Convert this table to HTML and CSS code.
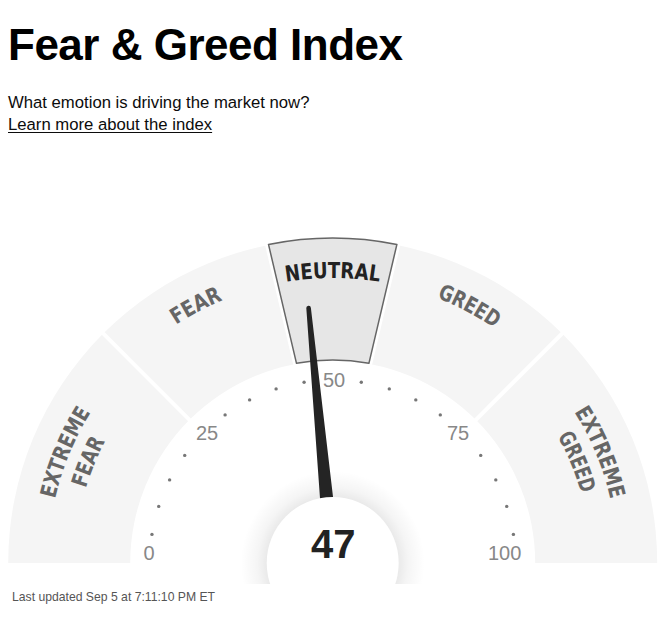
FILE: index.html
```html
<!DOCTYPE html>
<html lang="en">
<head>
<meta charset="utf-8">
<title>Fear &amp; Greed Index</title>
<link rel="stylesheet" href="styles.css">
</head>
<body>
<main class="page">
  <h1 class="title">Fear &amp; Greed Index</h1>
  <p class="subtitle">What emotion is driving the market now?</p>
  <a class="learn" href="#">Learn more about the index</a>
  <div class="gauge">
    <svg class="gauge-svg" width="650" height="352" viewBox="8 232 650 352" xmlns="http://www.w3.org/2000/svg">
      <defs>
        <path id="arc-outer" d="M47.7,563 A285,285 0 0 1 617.7,563"/>
        <path id="arc-inner" d="M74.7,563 A258,258 0 0 1 590.7,563"/>
        <radialGradient id="hub-shadow" cx="332.7" cy="563" r="92" gradientUnits="userSpaceOnUse">
          <stop offset="0.68" stop-color="#000" stop-opacity="0.10"/>
          <stop offset="0.82" stop-color="#000" stop-opacity="0.04"/>
          <stop offset="1" stop-color="#000" stop-opacity="0"/>
        </radialGradient>
      </defs>

      <!-- band ring -->
      <path class="band" d="M8.2,563 A324.5,324.5 0 0 1 657.2,563 L535.2,563 A202.5,202.5 0 0 0 130.2,563 Z"/>
      <line class="band-gap" x1="194.8" y1="425.1" x2="99.4" y2="329.7"/>
      <line class="band-gap" x1="470.6" y1="425.1" x2="566.0" y2="329.7"/>

      <!-- selected segment -->
      <path class="seg-halo" d="M268.5,244.4 A325,325 0 0 1 396.9,244.4 L368.9,363.3 A203,203 0 0 0 296.5,363.3 Z"/>
      <path class="seg-active" d="M268.5,244.4 A325,325 0 0 1 396.9,244.4 L368.9,363.3 A203,203 0 0 0 296.5,363.3 Z"/>

      <!-- band labels -->
      <text class="band-label"><textPath href="#arc-outer" startOffset="12.5%" text-anchor="middle" textLength="94" lengthAdjust="spacingAndGlyphs">EXTREME</textPath></text>
      <text class="band-label"><textPath href="#arc-inner" startOffset="12.5%" text-anchor="middle" textLength="51" lengthAdjust="spacingAndGlyphs">FEAR</textPath></text>
      <text class="band-label"><textPath href="#arc-outer" startOffset="34.44%" text-anchor="middle" textLength="53" lengthAdjust="spacingAndGlyphs">FEAR</textPath></text>
      <text class="band-label band-label-active"><textPath href="#arc-outer" startOffset="50%" text-anchor="middle" textLength="94" lengthAdjust="spacingAndGlyphs">NEUTRAL</textPath></text>
      <text class="band-label"><textPath href="#arc-outer" startOffset="65.56%" text-anchor="middle" textLength="65" lengthAdjust="spacingAndGlyphs">GREED</textPath></text>
      <text class="band-label"><textPath href="#arc-outer" startOffset="87.5%" text-anchor="middle" textLength="95" lengthAdjust="spacingAndGlyphs">EXTREME</textPath></text>
      <text class="band-label"><textPath href="#arc-inner" startOffset="87.5%" text-anchor="middle" textLength="62" lengthAdjust="spacingAndGlyphs">GREED</textPath></text>

      <!-- tick dots -->
      <g class="dots">
        <circle cx="151.95" cy="534.4" r="1.7"/>
        <circle cx="158.7" cy="506.4" r="1.7"/>
        <circle cx="169.6" cy="479.9" r="1.7"/>
        <circle cx="184.7" cy="455.4" r="1.7"/>
        <circle cx="225.1" cy="414.9" r="1.7"/>
        <circle cx="249.6" cy="399.9" r="1.7"/>
        <circle cx="276.1" cy="388.9" r="1.7"/>
        <circle cx="304.1" cy="382.3" r="1.7"/>
        <circle cx="361.3" cy="382.3" r="1.7"/>
        <circle cx="389.3" cy="388.9" r="1.7"/>
        <circle cx="415.8" cy="399.9" r="1.7"/>
        <circle cx="440.3" cy="414.9" r="1.7"/>
        <circle cx="480.7" cy="455.4" r="1.7"/>
        <circle cx="495.8" cy="479.9" r="1.7"/>
        <circle cx="506.7" cy="506.4" r="1.7"/>
        <circle cx="513.4" cy="534.4" r="1.7"/>
      </g>

      <!-- tick labels -->
      <text class="tick" x="149" y="560.2">0</text>
      <text class="tick" x="207" y="439.7">25</text>
      <text class="tick" x="334" y="387.2">50</text>
      <text class="tick" x="458" y="439.7">75</text>
      <text class="tick" x="504.7" y="560.2">100</text>

      <!-- hub shadow, needle, hub -->
      <circle cx="332.7" cy="563" r="92" fill="url(#hub-shadow)"/>
      <path class="needle" d="M340.66,562.25 L310.9,307.92 A2.3,2.3 0 0 0 306.32,308.36 L324.74,563.75 Z"/>
      <circle class="hub" cx="332.7" cy="563" r="66"/>
      <text class="score" x="333.3" y="558">47</text>
    </svg>
  </div>
  <p class="updated">Last updated Sep 5 at 7:11:10 PM ET</p>
</main>
</body>
</html>
```
FILE: styles.css
```css
html, body {
  margin: 0;
  padding: 0;
  background: #ffffff;
}

.page {
  padding: 0 8px;
  font-family: "Liberation Sans", Arial, sans-serif;
  color: #0c0c0c;
}

.title {
  margin: 20px 0 0 0;
  font-size: 44px;
  line-height: 50px;
  font-weight: 700;
  color: #000;
  letter-spacing: -0.5px;
}

.subtitle {
  margin: 21.5px 0 0 0;
  font-size: 16.7px;
  line-height: 22px;
  color: #0c0c0c;
}

.learn {
  display: inline-block;
  font-size: 16.7px;
  line-height: 22px;
  color: #0c0c0c;
  text-decoration: underline;
  text-underline-offset: 2px;
}

.gauge {
  margin-top: 96.5px;
}

.gauge-svg {
  display: block;
  overflow: hidden;
}

.band {
  fill: #f5f5f5;
}

.band-gap {
  stroke: #ffffff;
  stroke-width: 4;
}

.seg-halo {
  fill: #ffffff;
  stroke: #ffffff;
  stroke-width: 7;
  stroke-linejoin: round;
}

.seg-active {
  fill: #e6e6e6;
  stroke: #666666;
  stroke-width: 1.5;
  stroke-linejoin: round;
}

.band-label {
  font-family: "DejaVu Sans Condensed", "Liberation Sans", sans-serif;
  font-weight: 700;
  font-size: 22px;
  fill: #666666;
}

.band-label-active {
  fill: #222222;
}

.dots circle {
  fill: #777777;
}

.tick {
  font-family: "Liberation Sans", Arial, sans-serif;
  font-size: 20px;
  fill: #888888;
  text-anchor: middle;
}

.needle {
  fill: #242424;
}

.hub {
  fill: #ffffff;
}

.score {
  font-family: "Liberation Sans", Arial, sans-serif;
  font-size: 40px;
  font-weight: 700;
  fill: #222222;
  text-anchor: middle;
}

.updated {
  margin: 4.5px 0 0 0;
  padding-left: 4px;
  font-size: 12.2px;
  line-height: 16px;
  color: #555555;
}
```
